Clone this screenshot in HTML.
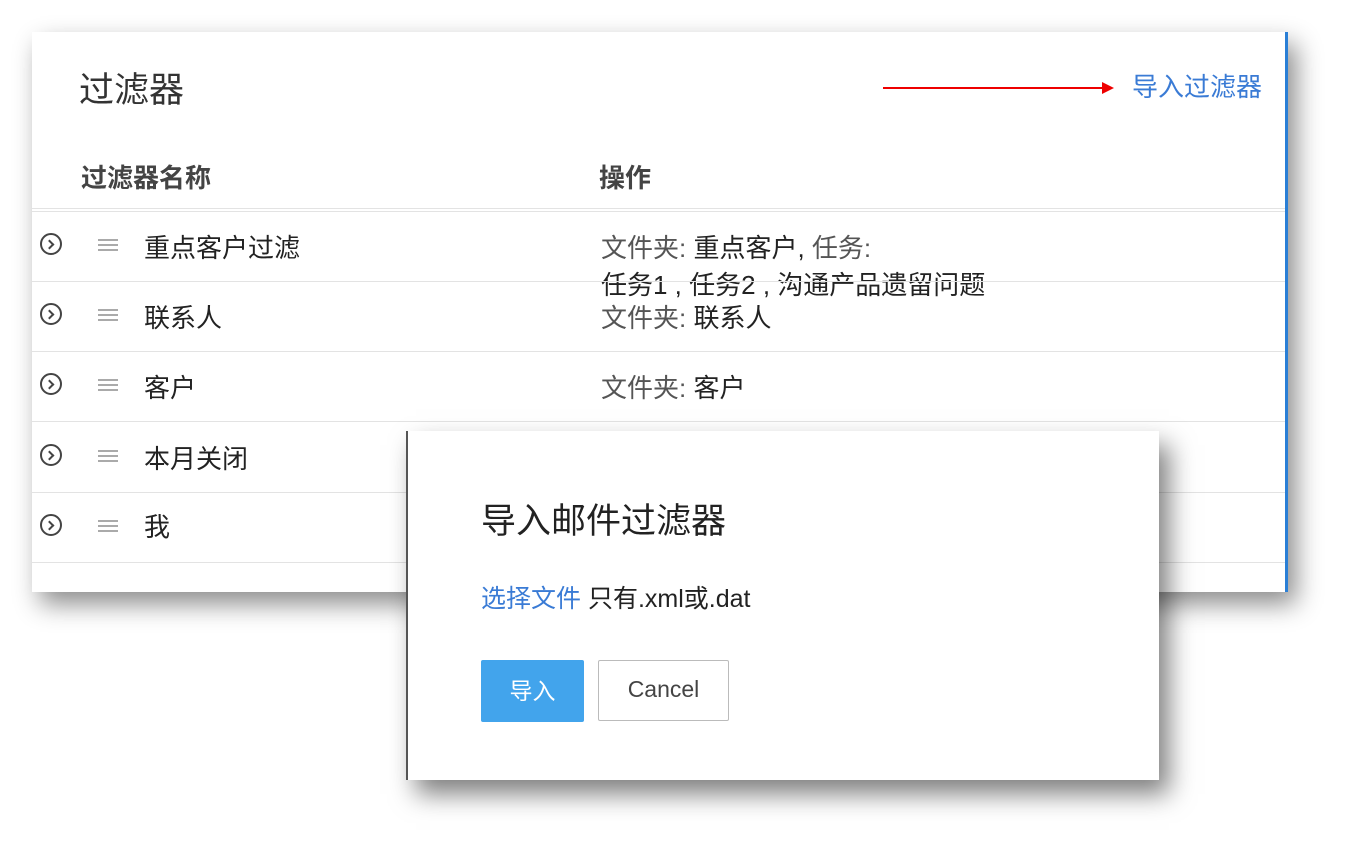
<!DOCTYPE html>
<html><head><meta charset="utf-8"><style>
body{margin:0;width:1353px;height:846px;background:#fff;position:relative;overflow:hidden;font-family:"Liberation Sans","Noto Sans CJK SC",sans-serif;}
.panel{position:absolute;left:32px;top:32px;width:1253px;height:560px;background:#fff;border-right:3px solid #2a7fd6;box-shadow:8px 12px 24px rgba(0,0,0,.45);}
.t{position:absolute;white-space:nowrap;line-height:1;}
.line{position:absolute;left:0;width:1253px;height:1px;background:#e3e3e3;}
.ic{position:absolute;left:8px;width:22px;height:22px;border:2px solid #444;border-radius:50%;box-sizing:border-box;}
.ic:after{content:"";position:absolute;left:4px;top:6px;width:5px;height:5px;border-right:2px solid #444;border-top:2px solid #444;transform:rotate(45deg);}
.hb{position:absolute;left:66px;width:20px;height:2px;background:#aaa;box-shadow:0 5px 0 #aaa,0 10px 0 #aaa;}
.dlg{position:absolute;left:406px;top:431px;width:751px;height:349px;background:#fff;border-left:2px solid #555;box-shadow:10px 14px 24px rgba(0,0,0,.5);}
</style></head><body>
<div class="panel">
 <div class="t" style="left:47px;top:41px;font-size:35px;color:#333">过滤器</div>
 <div style="position:absolute;left:851px;top:55px;width:222px;height:2px;background:#e00"></div>
 <div style="position:absolute;left:1070px;top:50px;width:0;height:0;border-left:12px solid #e00;border-top:6px solid transparent;border-bottom:6px solid transparent"></div>
 <div class="t" style="left:1100px;top:42px;font-size:26px;color:#3a7bd5">导入过滤器</div>
 <div class="t" style="left:49px;top:133px;font-size:26px;font-weight:bold;color:#444">过滤器名称</div>
 <div class="t" style="left:567px;top:133px;font-size:26px;font-weight:bold;color:#444">操作</div>
 <div class="line" style="top:176px"></div><div class="line" style="top:179px"></div>
 <div class="ic" style="top:201px"></div><div class="hb" style="top:207px"></div>
 <div class="t" style="left:112px;top:203px;font-size:26px;color:#222">重点客户过滤</div>
 <div class="t" style="left:569px;top:203px;font-size:26px;color:#555">文件夹: <span style="color:#222">重点客户,</span> 任务:</div>
 <div class="t" style="left:569px;top:240px;font-size:26px;color:#222">任务1 , 任务2 , 沟通产品遗留问题</div>
 <div class="line" style="top:249px"></div>
 <div class="ic" style="top:271px"></div><div class="hb" style="top:277px"></div>
 <div class="t" style="left:112px;top:273px;font-size:26px;color:#222">联系人</div>
 <div class="t" style="left:569px;top:273px;font-size:26px;color:#555">文件夹: <span style="color:#222">联系人</span></div>
 <div class="line" style="top:319px"></div>
 <div class="ic" style="top:341px"></div><div class="hb" style="top:347px"></div>
 <div class="t" style="left:112px;top:343px;font-size:26px;color:#222">客户</div>
 <div class="t" style="left:569px;top:343px;font-size:26px;color:#555">文件夹: <span style="color:#222">客户</span></div>
 <div class="line" style="top:389px"></div>
 <div class="ic" style="top:412px"></div><div class="hb" style="top:418px"></div>
 <div class="t" style="left:112px;top:414px;font-size:26px;color:#222">本月关闭</div>
 <div class="line" style="top:460px"></div>
 <div class="ic" style="top:482px"></div><div class="hb" style="top:488px"></div>
 <div class="t" style="left:112px;top:482px;font-size:26px;color:#222">我</div>
 <div class="line" style="top:530px"></div>
</div>
<div class="dlg">
 <div class="t" style="left:73px;top:73px;font-size:35px;color:#222">导入邮件过滤器</div>
 <div class="t" style="left:73px;top:156px;font-size:25px;color:#3a7bd5">选择文件 <span style="color:#222">只有.xml或.dat</span></div>
 <div style="position:absolute;left:73px;top:229px;width:103px;height:62px;background:#42a4ec;border-radius:2px;color:#fff;font-size:23px;line-height:62px;text-align:center">导入</div>
 <div style="position:absolute;left:190px;top:229px;width:129px;height:59px;border:1px solid #bbb;border-radius:2px;color:#444;font-size:23px;line-height:57px;text-align:center">Cancel</div>
</div>
</body></html>
